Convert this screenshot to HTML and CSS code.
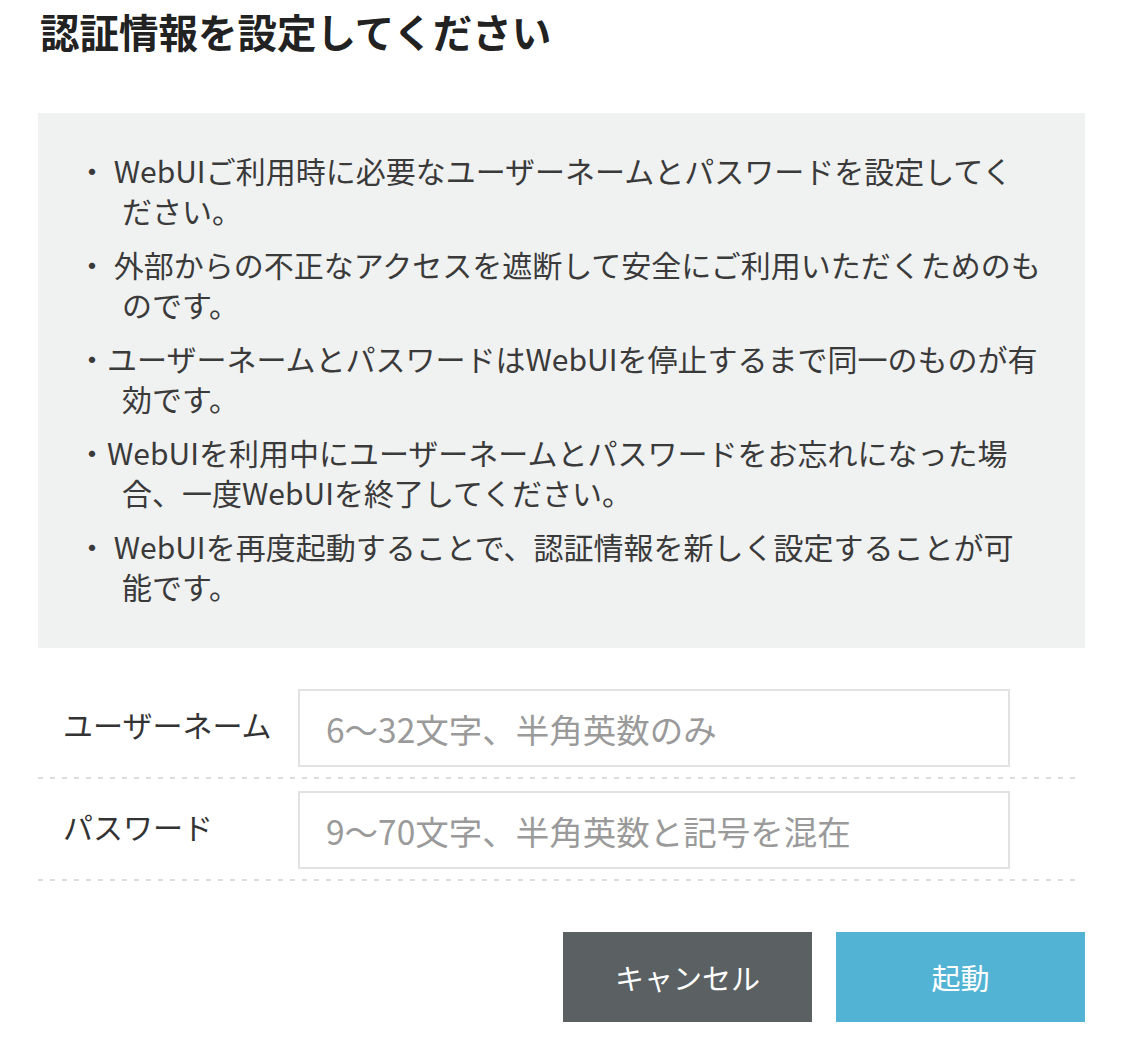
FILE: index.html
```html
<!DOCTYPE html>
<html lang="ja">
<head>
    <meta charset="UTF-8">
    <meta name="viewport" content="width=device-width, initial-scale=1.0">
    <title>認証情報の設定</title>
    <link rel="stylesheet" href="styles.css">
</head>
<body>
    <div class="auth-page">
        <h1 class="auth-title">認証情報を設定してください</h1>

        <!-- 注意書き -->
        <ul class="notice-box">
            <li>・ WebUIご利用時に必要なユーザーネームとパスワードを設定してく<br>ださい。</li>
            <li>・ 外部からの不正なアクセスを遮断して安全にご利用いただくためのも<br>のです。</li>
            <li>・ユーザーネームとパスワードはWebUIを停止するまで同一のものが有<br>効です。</li>
            <li>・WebUIを利用中にユーザーネームとパスワードをお忘れになった場<br>合、一度WebUIを終了してください。</li>
            <li>・ WebUIを再度起動することで、認証情報を新しく設定することが可<br>能です。</li>
        </ul>

        <!-- 入力フォーム -->
        <div class="auth-form">
            <div class="form-row">
                <label class="form-label" for="userName">ユーザーネーム</label>
                <input type="text" class="form-input" id="userName" placeholder="6～32文字、半角英数のみ">
            </div>
            <div class="form-row">
                <label class="form-label" for="userPass">パスワード</label>
                <input type="password" class="form-input" id="userPass" placeholder="9～70文字、半角英数と記号を混在">
            </div>
        </div>

        <div class="button-area">
            <button class="btn btn-cancel">キャンセル</button>
            <button class="btn btn-start">起動</button>
        </div>
    </div>
</body>
</html>
```

FILE: styles.css
```css
* {
    box-sizing: border-box;
}
body {
    margin: 0;
    background: #fff;
    color: #333;
    font-family: "Noto Sans CJK JP", "Noto Sans", sans-serif;
}
.auth-page {
    width: 1047px;
    margin-left: 38px;
}
.auth-title {
    margin: 8px 0 59px 2px;
    font-size: 39.5px;
    line-height: 46px;
    font-weight: bold;
    color: #222;
}
.notice-box {
    list-style: none;
    margin: 0;
    padding: 37px 20px 42px 84px;
    background: #f0f1f1;
    font-size: 30px;
    line-height: 40px;
    color: #3a3a3a;
}
.notice-box li {
    text-indent: -45px;
    white-space: nowrap;
}
.notice-box li + li {
    margin-top: 14px;
}
.auth-form {
    width: 1039px;
    margin-top: 29px;
}
.form-row {
    display: flex;
    align-items: center;
    padding: 12px 0 12px 25px;
    background-image: repeating-linear-gradient(to right, #dcdcdc 0 5px, transparent 5px 12px);
    background-size: 100% 2px;
    background-position: left bottom;
    background-repeat: no-repeat;
}
.form-label {
    width: 235px;
    margin-top: -8px;
    font-size: 30px;
    color: #333;
}
.form-input {
    width: 712px;
    height: 78px;
    padding: 0 0 0 26px;
    border: 2px solid #e2e2e2;
    background: #fff;
    font-family: inherit;
    font-size: 33.5px;
    color: #333;
    outline: none;
}
.form-input::placeholder {
    color: #9a9a9a;
}
.button-area {
    display: flex;
    justify-content: flex-end;
    gap: 24px;
    margin-top: 51px;
}
.btn {
    width: 249px;
    height: 90px;
    border: none;
    font-family: inherit;
    font-size: 29px;
    color: #fff;
    cursor: pointer;
}
.btn-cancel { background: #5b6163; }
.btn-start { background: #53b3d4; }
```
